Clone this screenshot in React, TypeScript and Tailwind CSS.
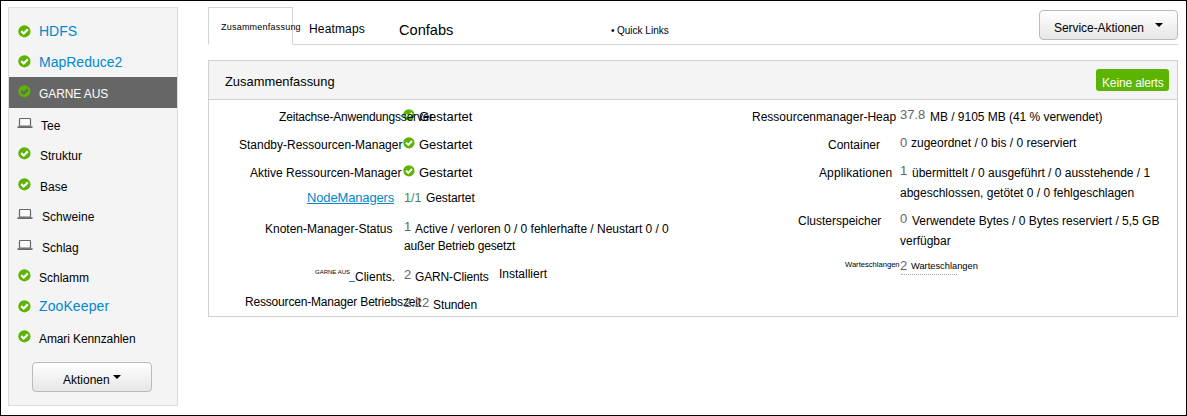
import React from "react";

function Check({ size = 13, mark = "#fff" }: { size?: number; mark?: string }) {
  return (
    <svg width={size} height={size} viewBox="0 0 13 13" className="block shrink-0">
      <circle cx="6.4" cy="6.3" r="6.1" fill="#5cb400" />
      <path d="M3.2 6.1 5.7 8.5 9.8 4.4" fill="none" stroke={mark} strokeWidth="2.2" />
    </svg>
  );
}

function Laptop() {
  return (
    <svg width="16" height="12" viewBox="0 0 16 12" className="-ml-px block shrink-0">
      <rect x="2.5" y="1.5" width="11" height="7.5" rx="0.8" fill="#fafafa" stroke="#666" strokeWidth="1.2" />
      <path d="M0.4 9.3H15.6V10.2Q15.6 11 14.6 11H1.4Q0.4 11 0.4 10.2Z" fill="#666" />
    </svg>
  );
}

function Caret({ className }: { className: string }) {
  return (
    <svg width="8" height="4" viewBox="0 0 8 4" className={`block shrink-0 ${className}`}>
      <path d="M0 0H8L4 4Z" fill="#000" />
    </svg>
  );
}

type Service = { name: string; icon: "check" | "laptop"; row: string; text: string };

const services: Service[] = [
  { name: "HDFS", icon: "check", row: "h-[30px]", text: "ml-2 mt-[7px] text-sm/4 text-[#0088cc]" },
  { name: "MapReduce2", icon: "check", row: "h-[31px]", text: "ml-2 mt-2 text-sm/4 text-[#0088cc]" },
  { name: "GARNE AUS", icon: "check", row: "h-[31px] bg-[#666]", text: "ml-2 mt-[9px] tracking-[-0.1px] text-white" },
  { name: "Tee", icon: "laptop", row: "h-[30px]", text: "ml-[8px] mt-[10px]" },
  { name: "Struktur", icon: "check", row: "h-[31px]", text: "ml-[9px] mt-[10px]" },
  { name: "Base", icon: "check", row: "h-[30px]", text: "ml-[9px] mt-[10px]" },
  { name: "Schweine", icon: "laptop", row: "h-[31px]", text: "ml-[9px] mt-[10px] tracking-[0.05px]" },
  { name: "Schlag", icon: "laptop", row: "h-[30px]", text: "ml-[9px] mt-[10px]" },
  { name: "Schlamm", icon: "check", row: "h-[31px]", text: "ml-2 mt-[10px]" },
  { name: "ZooKeeper", icon: "check", row: "h-[30px]", text: "ml-2 mt-[7px] text-sm/4 tracking-[0.1px] text-[#0088cc]" },
  { name: "Amari Kennzahlen", icon: "check", row: "h-[31px]", text: "ml-2 mt-[10px] tracking-[-0.1px]" },
];

function Sidebar() {
  return (
    <aside className="flex h-[399px] w-[170px] shrink-0 flex-col border border-[#dcdcdc] bg-[#f4f4f4] pt-2">
      {services.map((s) => (
        <div key={s.name} className={`flex shrink-0 items-start pl-[9px] ${s.row}`}>
          <span className={s.name === "GARNE AUS" ? "mt-2 shrink-0" : "mt-[9px] shrink-0"}>
            {s.icon === "laptop" ? <Laptop /> : <Check mark={s.name === "GARNE AUS" ? "#666" : "#fff"} />}
          </span>
          <span className={s.text}>{s.name}</span>
        </div>
      ))}
      <button className="ml-[23px] mt-[10px] flex h-[30px] w-[120px] shrink-0 items-start rounded border border-[#bbb] bg-linear-to-b from-white to-[#e6e6e6] pl-[30px] pt-[9px]">
        <span>Aktionen</span>
        <Caret className="ml-[3px] mt-[3px]" />
      </button>
    </aside>
  );
}

function Tabs() {
  return (
    <nav className="flex h-[38px] items-start border-b border-[#d4d4d4]">
      <div className="h-[38px] w-[85px] shrink-0 border border-b-white border-[#d4d4d4] bg-white pl-3 pt-[11px] text-[9px]/4 tracking-[0.22px]">
        Zusammenfassung
      </div>
      <span className="ml-4 mt-[14px] w-[90px] shrink-0 tracking-[0.15px]">Heatmaps</span>
      <span className="mt-[15px] w-[212px] shrink-0 text-[14.6px]/4">Confabs</span>
      <span className="mt-4 text-[10px]/4">
        <span className="mr-[2.5px]">•</span>Quick Links
      </span>
      <button className="ml-auto mt-[3px] flex h-[30px] w-[139px] shrink-0 items-start rounded border border-[#bbb] bg-linear-to-b from-white to-[#e6e6e6] pl-[14px] pt-[9px]">
        <span className="w-[101px] text-left tracking-[-0.05px]">Service-Aktionen</span>
        <Caret className="mt-[3px]" />
      </button>
    </nav>
  );
}

function LeftRow({ h, label, text, children }: { h: string; label: string; text: React.ReactNode; children: React.ReactNode }) {
  return (
    <div className={`flex items-start ${h}`}>
      <div className={`w-[195px] shrink-0 ${label}`}>{text}</div>
      {children}
    </div>
  );
}

function RightRow({ h, label, text, children }: { h: string; label: string; text: string; children: React.ReactNode }) {
  return (
    <div className={`flex items-start ${h}`}>
      <div className={`w-40 shrink-0 ${label}`}>{text}</div>
      {children}
    </div>
  );
}

const num = "shrink-0 text-[13px]/4 text-[#666]";

function Summary() {
  return (
    <section className="mt-[15px] h-[257px] border border-[#d0d0d0]">
      <header className="flex h-[39px] items-start justify-between border-b border-[#d0d0d0] bg-[#f4f4f4] pl-4 pr-2">
        <h2 className="mt-[13px] text-[12.9px]/4">Zusammenfassung</h2>
        <span className="mt-2 h-[22px] w-[73px] rounded-[3px] bg-[#5cb400] pl-[6px] pt-[6px] tracking-[-0.15px] text-white">
          Keine alerts
        </span>
      </header>
      <div className="flex">
        <div className="w-[531px] shrink-0 pt-[9px]">
          <LeftRow h="h-7" label="pl-[70px] tracking-[-0.18px]" text="Zeitachse-Anwendungsserver">
            <span className="-ml-px -z-10"><Check size={12} /></span>
            <span className="ml-1 text-[13px]/4">Gestartet</span>
          </LeftRow>
          <LeftRow h="h-7" label="pl-[30px]" text="Standby-Ressourcen-Manager">
            <span className="-ml-px"><Check size={12} /></span>
            <span className="ml-1 text-[13px]/4">Gestartet</span>
          </LeftRow>
          <LeftRow h="h-[25px]" label="pl-[41px]" text="Aktive Ressourcen-Manager">
            <span className="-ml-px"><Check size={12} /></span>
            <span className="ml-1 text-[13px]/4">Gestartet</span>
          </LeftRow>
          <LeftRow
            h="h-[30px]"
            label="pl-[98px]"
            text={<a className="text-[13px]/4 tracking-[-0.15px] text-[#0088cc] underline">NodeManagers</a>}
          >
            <span className="w-[22px] shrink-0 text-[12.6px]/4 text-[#468847]">1/1</span>
            <span className="tracking-[-0.08px]">Gestartet</span>
          </LeftRow>
          <LeftRow h="h-[47px]" label="mt-px pl-[56px]" text="Knoten-Manager-Status">
            <div>
              <div className="flex items-start">
                <span className={`-mt-px w-[11px] ${num}`}>1</span>
                <span className="mt-px tracking-[-0.02px]">Active / verloren 0 / 0 fehlerhafte / Neustart 0 / 0</span>
              </div>
              <div className="mt-px tracking-[-0.17px]">außer Betrieb gesetzt</div>
            </div>
          </LeftRow>
          <LeftRow
            h="h-[27px]"
            label="pl-[106px]"
            text={
              <span className="flex items-start">
                <span className="-mt-[3px] w-[34px] shrink-0 text-[6px]/4">GARNE AUS</span>
                <span className="mt-[14px] h-px w-[6px] shrink-0 bg-[#0088cc]" />
                <span className="mt-[2px]">Clients.</span>
              </span>
            }
          >
            <span className={`w-[11px] ${num}`}>2</span>
            <span className="mt-[2px] w-[84px] shrink-0 tracking-[-0.15px]">GARN-Clients</span>
            <span className="-mt-px">Installiert</span>
          </LeftRow>
          <LeftRow h="h-4" label="pl-[36px] tracking-[-0.18px]" text="Ressourcen-Manager Betriebszeit">
            <span className={`mt-px w-[29px] ${num}`}>2.22</span>
            <span className="mt-[3px] tracking-[-0.1px]">Stunden</span>
          </LeftRow>
        </div>

        <div className="pt-[7px]">
          <RightRow h="h-7" label="mt-[2px] pl-3" text="Ressourcenmanager-Heap">
            <span className={`w-[30px] ${num}`}>37.8</span>
            <span className="mt-[2px] tracking-[-0.03px]">MB / 9105 MB (41 % verwendet)</span>
          </RightRow>
          <RightRow h="h-7" label="mt-[2px] pl-[88px]" text="Container">
            <span className={`w-[11px] ${num}`}>0</span>
            <span>zugeordnet / 0 bis / 0 reserviert</span>
          </RightRow>
          <RightRow h="h-12" label="mt-[2px] pl-[79px] tracking-[0.1px]" text="Applikationen">
            <div className="mt-[2px]">
              <div className="flex items-start">
                <span className={`-mt-[2px] w-3 ${num}`}>1</span>
                <span>übermittelt / 0 ausgeführt / 0 ausstehende / 1</span>
              </div>
              <div className="mt-1">abgeschlossen, getötet 0 / 0 fehlgeschlagen</div>
            </div>
          </RightRow>
          <RightRow h="h-12" label="mt-[2px] pl-[58px]" text="Clusterspeicher">
            <div className="mt-[2px]">
              <div className="flex items-start">
                <span className={`-mt-[2px] w-3 ${num}`}>0</span>
                <span>Verwendete Bytes / 0 Bytes reserviert / 5,5 GB</span>
              </div>
              <div className="mt-1">verfügbar</div>
            </div>
          </RightRow>
          <RightRow h="h-5" label="-mt-[2px] pl-[105px] text-[7.6px]/4" text="Warteschlangen">
            <div className="ml-px flex h-[16px] w-[56px] items-start border-b border-dotted border-[#aaa]">
              <span className={`-ml-px -mt-px w-[11px] ${num}`}>2</span>
              <span className="-mt-px text-[9.3px]/4">Warteschlangen</span>
            </div>
          </RightRow>
        </div>
      </div>
    </section>
  );
}

export default function App() {
  return (
    <div className="isolate flex h-[416px] w-[1187px] items-start overflow-hidden whitespace-nowrap border border-black bg-white pl-[7px] pt-[6px] font-['Liberation_Sans',Arial,sans-serif] text-xs/4 text-black">
      <Sidebar />
      <main className="ml-[30px] w-[970px] shrink-0">
        <Tabs />
        <Summary />
      </main>
    </div>
  );
}
